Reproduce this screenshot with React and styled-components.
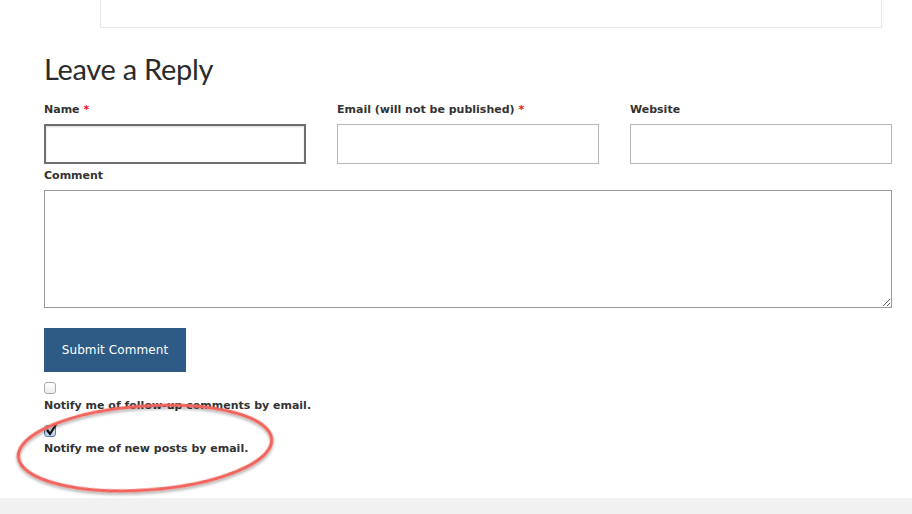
import React from 'react'
import styled, { createGlobalStyle } from 'styled-components'

const GlobalStyle = createGlobalStyle`
  html, body {
    margin: 0;
    padding: 0;
    background: #fff;
  }
`

const Page = styled.div`
  position: relative;
  width: 912px;
  height: 514px;
  overflow: hidden;
  font-family: 'DejaVu Sans', Verdana, sans-serif;
  color: #333;
`

const Content = styled.div`
  padding: 0 20px 0 44px;
`

const PrevCard = styled.div`
  margin: -34px 0 0 100px;
  width: 782px;
  height: 62px;
  border: 1px solid #e8e8e8;
  border-top: none;
  box-sizing: border-box;
  padding: 21px 11px 0;
  font-size: 12px;
  line-height: 14px;
  color: #333;
`

const Title = styled.h3`
  margin: 23px 0 0;
  font-family: Lato, 'Open Sans', sans-serif;
  font-weight: 400;
  font-size: 29px;
  line-height: 36px;
  letter-spacing: -0.3px;
  color: #2b2b2b;
`

const FieldRow = styled.div`
  display: grid;
  grid-template-columns: repeat(3, 262px);
  column-gap: 31px;
  margin-top: 16px;
`

const Field = styled.div`
  display: flex;
  flex-direction: column;
`

const Label = styled.label`
  display: block;
  font-size: 11px;
  font-weight: 700;
  line-height: 14px;
  height: 14px;
  margin-bottom: 7px;
  color: #333;
`

const Required = styled.span`
  color: #e3110f;
`

const Input = styled.input`
  box-sizing: border-box;
  width: 262px;
  height: 40px;
  margin: 0;
  background: #fff;
  border: ${p => (p.$focused ? '2px solid #6e6e6e' : '1px solid #b7b7b7')};
  box-shadow: ${p => (p.$focused ? 'inset 0 1px 2px rgba(0,0,0,0.15)' : 'none')};
  outline: none;
`

const CommentLabel = styled(Label)`
  margin-top: 5px;
  margin-bottom: 0;
`

const TextArea = styled.textarea`
  display: block;
  box-sizing: border-box;
  width: 848px;
  height: 118px;
  margin: 7px 0 0;
  border: 1px solid #9a9a9a;
  background: #fff;
  resize: both;
  outline: none;
`

const Submit = styled.button`
  display: block;
  margin-top: 20px;
  width: 142px;
  height: 44px;
  border: none;
  background: #2d5b86;
  color: #fff;
  font-family: 'DejaVu Sans', Verdana, sans-serif;
  font-size: 12px;
  font-weight: 400;
  letter-spacing: 0.1px;
  padding: 0;
  cursor: pointer;
`

const CheckGroup = styled.div`
  margin-top: ${p => p.$top}px;
`

const Box = styled.span`
  display: block;
  box-sizing: border-box;
  width: 12px;
  height: 12px;
  border-radius: 3px;
  border: 1px solid ${p => (p.$checked ? '#5d7fa8' : '#a9a9a9')};
  background: ${p => (p.$checked ? 'linear-gradient(#e4eefb, #b9d0ec)' : 'linear-gradient(#fff, #ececec)')};
  position: relative;
  overflow: visible;
`

const Tick = styled.svg`
  position: absolute;
  left: 0;
  top: -3px;
`

const CheckText = styled.p`
  margin: 5px 0 0;
  font-size: 11px;
  font-weight: 700;
  line-height: 14px;
  color: #333;
`

const Footer = styled.div`
  position: absolute;
  left: 0;
  right: 0;
  bottom: 0;
  height: 16px;
  background: #f1f1f1;
`

const Highlight = styled.svg`
  position: absolute;
  left: 0;
  top: 0;
  pointer-events: none;
`

const Check = ({ checked, children, top }) => (
  <CheckGroup $top={top}>
    <Box $checked={checked}>
      {checked && (
        <Tick width="13" height="14" viewBox="0 0 13 14">
          <path d="M2.5 7.5 L5 11 L11 1.5" fill="none" stroke="#111" strokeWidth="2.2" strokeLinecap="round" strokeLinejoin="round" />
        </Tick>
      )}
    </Box>
    <CheckText>{children}</CheckText>
  </CheckGroup>
)

const App = () => (
  <Page>
    <GlobalStyle />
    <PrevCard>subscribe</PrevCard>
    <Content>
      <Title>Leave a Reply</Title>
      <FieldRow>
        <Field>
          <Label>Name <Required>*</Required></Label>
          <Input $focused />
        </Field>
        <Field>
          <Label>Email (will not be published) <Required>*</Required></Label>
          <Input />
        </Field>
        <Field>
          <Label>Website</Label>
          <Input />
        </Field>
      </FieldRow>
      <CommentLabel>Comment</CommentLabel>
      <TextArea />
      <Submit>Submit Comment</Submit>
      <Check top={10}>Notify me of follow-up comments by email.</Check>
      <Check top={12} checked>Notify me of new posts by email.</Check>
    </Content>
    <Highlight width="912" height="514">
      <defs>
        <filter id="shadow" x="-10%" y="-20%" width="120%" height="140%">
          <feDropShadow dx="0" dy="2" stdDeviation="1.5" floodColor="#000" floodOpacity="0.35" />
        </filter>
      </defs>
      <ellipse cx="145" cy="448" rx="127" ry="42" transform="rotate(-4 145 448)" fill="none" stroke="#f1645c" strokeWidth="3.2" filter="url(#shadow)" />
    </Highlight>
    <Footer />
  </Page>
)

export default App
